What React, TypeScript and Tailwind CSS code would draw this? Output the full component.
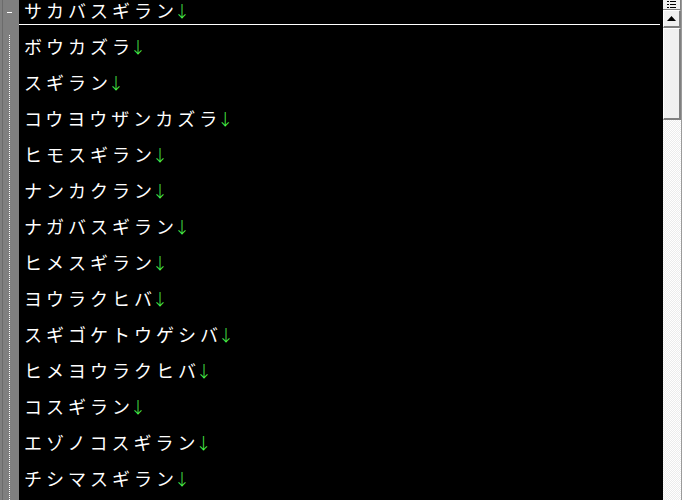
import React from 'react';

const rows = [
  'ボウカズラ',
  'スギラン',
  'コウヨウザンカズラ',
  'ヒモスギラン',
  'ナンカクラン',
  'ナガバスギラン',
  'ヒメスギラン',
  'ヨウラクヒバ',
  'スギゴケトウゲシバ',
  'ヒメヨウラクヒバ',
  'コスギラン',
  'エゾノコスギラン',
  'チシマスギラン',
];

function Line({ text }: { text: string }) {
  return (
    <div className="flex items-center whitespace-nowrap text-[18px] font-['Noto_Sans_CJK_JP',sans-serif]">
      <span className="text-white tracking-[4px]">{text.slice(0, -1)}</span>
      <span className="text-white">{text.slice(-1)}</span>
      <span className="text-[#4dff4d] text-[16px] font-light">↓</span>
    </div>
  );
}

function Scrollbar() {
  return (
    <div className="flex w-[20px] h-full shrink-0">
      <div className="flex flex-col w-[18px] h-full">
        <div className="h-[10px] shrink-0 bg-[#f0f0f0] border-r border-b border-[#808080] flex items-center justify-center">
          <svg width="9" height="7" viewBox="0 0 9 7">
            <rect x="0" y="0" width="2" height="1" fill="#000" />
            <rect x="3" y="0" width="6" height="1" fill="#000" />
            <rect x="0" y="3" width="2" height="1" fill="#000" />
            <rect x="3" y="3" width="6" height="1" fill="#000" />
            <rect x="0" y="6" width="2" height="1" fill="#000" />
            <rect x="3" y="6" width="6" height="1" fill="#000" />
          </svg>
        </div>
        <div className="h-[18px] shrink-0 bg-[#f0f0f0] border-t border-l border-white border-r-2 border-b-2 border-r-[#808080] border-b-[#808080] flex items-center justify-center">
          <svg width="9" height="5" viewBox="0 0 9 5">
            <path d="M4.5 0 L9 5 L0 5 Z" fill="#000" />
          </svg>
        </div>
        <div className="h-[92px] shrink-0 bg-[#f0f0f0] border-t border-l border-white border-r-2 border-b-2 border-r-[#808080] border-b-[#808080]" />
        <div className="flex-1 bg-[repeating-conic-gradient(#ffffff_0_25%,#ececec_0_50%)] bg-[length:2px_2px]" />
      </div>
      <div className="w-[1px] h-full bg-[#9a9a9a]" />
      <div className="w-[1px] h-full bg-white" />
    </div>
  );
}

export default function App() {
  return (
    <div className="flex w-[683px] h-[500px] overflow-hidden bg-black">
      <div className="flex w-[19px] h-full shrink-0 bg-[#7f7f7f]">
        <div className="w-[2px]" />
        <div className="w-[1px] h-full bg-[#6b6b6b]" />
        <div className="flex flex-col items-center w-[16px]">
          <div className="h-[12px] shrink-0" />
          <div className="w-[5px] h-[1px] shrink-0 bg-white -ml-[4px]" />
          <div className="h-[22px] shrink-0" />
          <div className="flex-1 border-l border-dotted border-white -ml-[3px]" />
        </div>
      </div>
      <div className="flex flex-col flex-1 min-w-0 pl-[5px] overflow-hidden">
        <div className="h-[20px] shrink-0 flex items-center">
          <Line text="サカバスギラン" />
        </div>
        <div className="h-[4px] shrink-0" />
        <div className="h-[1px] shrink-0 bg-white -ml-[8px] mr-[3px]" />
        <div className="h-[3px] shrink-0" />
        {rows.map((r) => (
          <div key={r} className="h-[36px] flex items-center shrink-0">
            <Line text={r} />
          </div>
        ))}
      </div>
      <Scrollbar />
    </div>
  );
}
